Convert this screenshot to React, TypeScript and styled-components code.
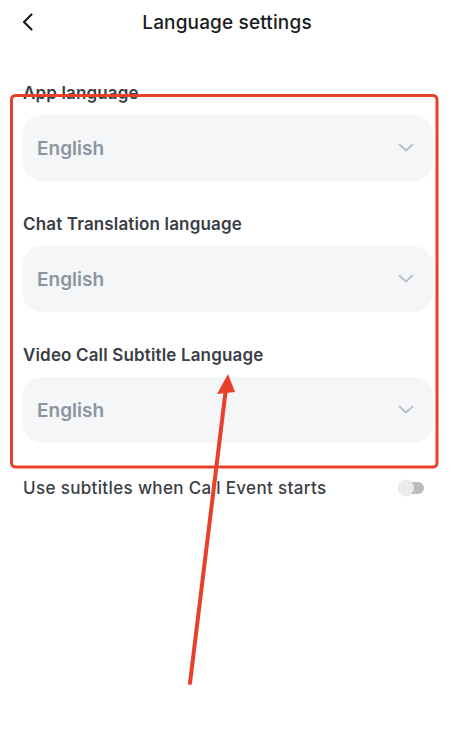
import React from "react";
import styled, { createGlobalStyle } from "styled-components";

const Global = createGlobalStyle`
  html, body { margin: 0; padding: 0; background: #ffffff; }
  body { font-family: Inter, "Noto Sans", "Liberation Sans", sans-serif; -webkit-font-smoothing: antialiased; }
`;

const Page = styled.div`
  position: relative;
  width: 450px;
  height: 734px;
  overflow: hidden;
  background: #fff;
`;

const Header = styled.header`
  position: relative;
  height: 44px;
  display: flex;
  align-items: center;
  justify-content: center;
`;

const BackButton = styled.button`
  position: absolute;
  left: 14px;
  top: 8px;
  width: 28px;
  height: 28px;
  padding: 0;
  border: none;
  background: none;
  display: flex;
  align-items: center;
  justify-content: center;
`;

const Title = styled.h1`
  margin: 0 0 0 4px;
  font-size: 19px;
  font-weight: 500;
  color: #1a1c20;
  letter-spacing: 0.15px;
`;

const Content = styled.main`
  display: flex;
  flex-direction: column;
  padding: 39px 17px 0 22px;
`;

const Section = styled.section`
  display: flex;
  flex-direction: column;
  gap: 12px;
  margin-bottom: 33px;
`;

const Label = styled.div`
  font-size: 17px;
  line-height: 20px;
  font-weight: 600;
  color: #3a3e45;
  padding-left: 1px;
  letter-spacing: 0.15px;
`;

const Select = styled.div`
  height: 66px;
  border-radius: 20px;
  background: #f5f6f8;
  display: flex;
  align-items: center;
  justify-content: space-between;
  padding: 0 19px 0 15px;
`;

const Value = styled.span`
  font-size: 19px;
  font-weight: 600;
  color: #8d94a1;
`;

const ToggleRow = styled.div`
  display: flex;
  align-items: center;
  justify-content: space-between;
  margin-top: 2px;
  padding-left: 1px;
  padding-right: 9px;
`;

const ToggleText = styled.span`
  font-size: 17px;
  line-height: 20px;
  font-weight: 500;
  color: #3a3e45;
  letter-spacing: 0.35px;
`;

const Toggle = styled.div`
  position: relative;
  width: 26px;
  height: 16px;
`;

const Track = styled.div`
  position: absolute;
  left: 6px;
  top: 2px;
  width: 20px;
  height: 12px;
  border-radius: 6px;
  background: #bdbdbd;
`;

const Knob = styled.div`
  position: absolute;
  left: 0;
  top: 0;
  width: 16px;
  height: 16px;
  border-radius: 50%;
  background: #ebebeb;
  box-shadow: 0 0 1px rgba(0,0,0,0.15);
`;

const Annotation = styled.svg`
  position: absolute;
  left: 0;
  top: 0;
  pointer-events: none;
`;

const Chevron = () => (
  <svg width="16" height="10" viewBox="0 0 16 10">
    <path d="M1.5 1.5 L8 7.5 L14.5 1.5" fill="none" stroke="#b9bfca" strokeWidth="1.8" strokeLinecap="round" strokeLinejoin="round" />
  </svg>
);

const fields = ["App language", "Chat Translation language", "Video Call Subtitle Language"];

export default function App() {
  return (
    <Page>
      <Global />
      <Header>
        <BackButton aria-label="Back">
          <svg width="14" height="20" viewBox="0 0 14 20">
            <path d="M10.5 2.5 L3 10 L10.5 17.5" fill="none" stroke="#1a1c20" strokeWidth="2.2" strokeLinecap="round" strokeLinejoin="round" />
          </svg>
        </BackButton>
        <Title>Language settings</Title>
      </Header>
      <Content>
        {fields.map((f) => (
          <Section key={f}>
            <Label>{f}</Label>
            <Select>
              <Value>English</Value>
              <Chevron />
            </Select>
          </Section>
        ))}
        <ToggleRow>
          <ToggleText>Use subtitles when Call Event starts</ToggleText>
          <Toggle>
            <Track />
            <Knob />
          </Toggle>
        </ToggleRow>
      </Content>
      <Annotation width="450" height="734" viewBox="0 0 450 734">
        <rect x="11.5" y="95.5" width="425.5" height="371.5" rx="4" fill="none" stroke="#e9402b" strokeWidth="3" />
        <line x1="190" y1="683" x2="226" y2="388" stroke="#e9402b" strokeWidth="4" strokeLinecap="round" />
        <polygon points="228,374 217,394 235,392" fill="#e9402b" />
      </Annotation>
    </Page>
  );
}
